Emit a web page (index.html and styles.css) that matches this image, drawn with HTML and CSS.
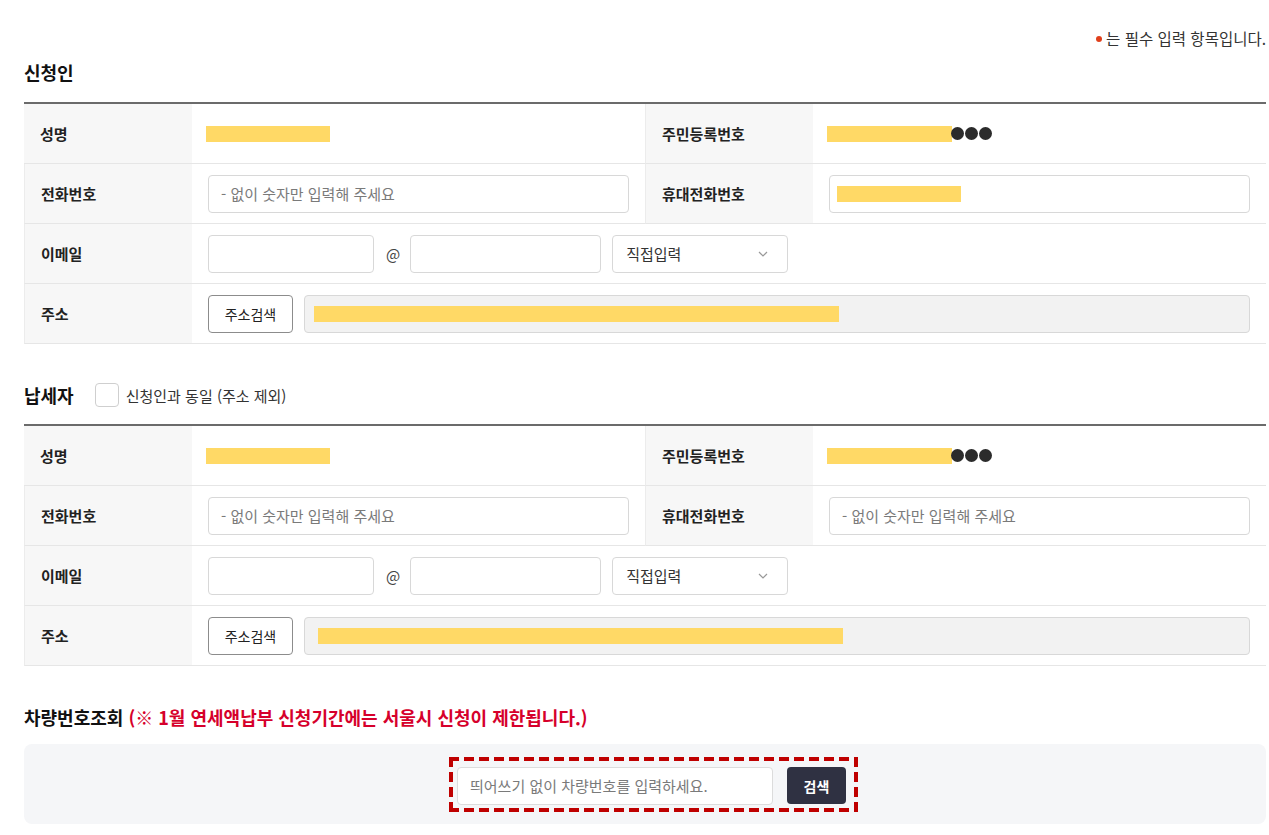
FILE: index.html
```html
<!DOCTYPE html>
<html lang="ko">
<head>
<meta charset="UTF-8">
<meta name="viewport" content="width=device-width, initial-scale=1.0">
<title>자동차세 연세액 신청</title>
<link rel="stylesheet" href="styles.css">
</head>
<body>

<div class="page">
  <p class="notice"><span class="req-dot"></span>는 필수 입력 항목입니다.</p>

  <h3 class="section-title">신청인</h3>
  <div class="form-table">
    <div class="cell label">성명</div>
    <div class="cell value"><span class="mask mask-name"></span></div>
    <div class="cell label">주민등록번호</div>
    <div class="cell value"><span class="mask mask-id"></span><span class="dots"><i></i><i></i><i></i></span></div>

    <div class="cell label">전화번호</div>
    <div class="cell value"><input class="field wide" type="text" placeholder="- 없이 숫자만 입력해 주세요"></div>
    <div class="cell label">휴대전화번호</div>
    <div class="cell value"><div class="field wide filled"><span class="mask mask-phone"></span></div></div>

    <div class="cell label">이메일</div>
    <div class="cell value span3">
      <input class="field email-id" type="text">
      <span class="at">@</span>
      <input class="field email-domain" type="text">
      <div class="field select">직접입력
        <svg width="10" height="6" viewBox="0 0 10 6"><path d="M1 1l4 4 4-4" fill="none" stroke="#999" stroke-width="1.2"/></svg>
      </div>
    </div>

    <div class="cell label">주소</div>
    <div class="cell value span3">
      <button type="button" class="btn-addr">주소검색</button>
      <div class="field addr"><span class="mask mask-addr"></span></div>
    </div>
  </div>

  <div class="section-head">
    <h3 class="section-title">납세자</h3>
    <label class="check"><span class="box"></span>신청인과 동일 (주소 제외)</label>
  </div>
  <div class="form-table">
    <div class="cell label">성명</div>
    <div class="cell value"><span class="mask mask-name"></span></div>
    <div class="cell label">주민등록번호</div>
    <div class="cell value"><span class="mask mask-id"></span><span class="dots"><i></i><i></i><i></i></span></div>

    <div class="cell label">전화번호</div>
    <div class="cell value"><input class="field wide" type="text" placeholder="- 없이 숫자만 입력해 주세요"></div>
    <div class="cell label">휴대전화번호</div>
    <div class="cell value"><input class="field wide" type="text" placeholder="- 없이 숫자만 입력해 주세요"></div>

    <div class="cell label">이메일</div>
    <div class="cell value span3">
      <input class="field email-id" type="text">
      <span class="at">@</span>
      <input class="field email-domain" type="text">
      <div class="field select">직접입력
        <svg width="10" height="6" viewBox="0 0 10 6"><path d="M1 1l4 4 4-4" fill="none" stroke="#999" stroke-width="1.2"/></svg>
      </div>
    </div>

    <div class="cell label">주소</div>
    <div class="cell value span3">
      <button type="button" class="btn-addr">주소검색</button>
      <div class="field addr"><span class="mask mask-addr2"></span></div>
    </div>
  </div>

  <h3 class="section-title car-title">차량번호조회 <span class="warn">(※ 1월 연세액납부 신청기간에는 서울시 신청이 제한됩니다.)</span></h3>
  <div class="car-box">
    <div class="car-search">
      <input class="field car-input" type="text" placeholder="띄어쓰기 없이 차량번호를 입력하세요.">
      <button type="button" class="btn-search">검색</button>
    </div>
  </div>
</div>

</body>
</html>
```

FILE: styles.css
```css
body {
  margin: 0;
  padding: 0;
  background-color: #fff;
  font-family: "Noto Sans CJK KR", "Noto Sans", sans-serif;
  color: #222;
}

.page {
  padding: 0 3px 0 24px;
}

.notice {
  margin: 0;
  padding-top: 27px;
  display: flex;
  align-items: center;
  justify-content: flex-end;
  gap: 4px;
  font-size: 15.5px;
  line-height: 22px;
  color: #333;
}

.req-dot {
  width: 6px;
  height: 6px;
  border-radius: 50%;
  background-color: #e0401c;
  margin-top: 2px;
}

.section-title {
  margin: 0;
  font-size: 18px;
  font-weight: bold;
  color: #111;
  line-height: 26px;
}

.notice + .section-title {
  margin-top: 10px;
  margin-bottom: 17px;
}

.form-table {
  display: grid;
  grid-template-columns: 168px 453px 168px 1fr;
  border-top: 2px solid #6b6b6b;
}

.cell {
  height: 60px;
  border-bottom: 1px solid #e6e6e6;
  display: flex;
  align-items: center;
  box-sizing: border-box;
}

.label {
  background-color: #f7f7f7;
  padding-left: 16px;
  font-size: 15px;
  font-weight: bold;
  color: #222;
}

.value {
  padding-left: 16px;
  gap: 11px;
}

.value + .label {
  border-left: 1px solid #ececec;
}

.span3 {
  grid-column: span 3;
}

.mask {
  display: inline-block;
  height: 16px;
  background-color: #ffd966;
}

.mask-name {
  width: 124px;
  margin-left: -2px;
}

.mask-id {
  width: 125px;
  margin-left: -2px;
}

.mask-phone {
  width: 124px;
}

.mask-addr {
  width: 525px;
}

.mask-addr2 {
  width: 525px;
  margin-left: 4px;
}

.dots {
  display: inline-flex;
  gap: 1px;
  margin-left: -12px;
}

.dots i {
  display: block;
  width: 13px;
  height: 13px;
  border-radius: 50%;
  background-color: #2b2b2b;
}

.field {
  height: 38px;
  border: 1px solid #d8d8d8;
  border-radius: 4px;
  box-sizing: border-box;
  font-family: inherit;
  font-size: 15px;
  padding: 0 12px;
  color: #333;
  background-color: #fff;
}

.field::placeholder {
  color: #7a7a7a;
}

.wide {
  width: 421px;
}

.filled {
  display: flex;
  align-items: center;
  padding-left: 7px;
}

.email-id {
  width: 166px;
}

.at {
  font-size: 15px;
  color: #444;
  margin-left: 1px;
  margin-right: -1px;
}

.email-domain {
  width: 191px;
}

.select {
  width: 176px;
  display: flex;
  align-items: center;
  justify-content: space-between;
  padding: 0 19px 0 13px;
}

.btn-addr {
  height: 38px;
  width: 85px;
  border: 1px solid #8c8c8c;
  border-radius: 4px;
  background-color: #fff;
  font-family: inherit;
  font-size: 14px;
  color: #222;
  padding: 0;
}

.addr {
  flex: 1;
  margin-right: 16px;
  background-color: #f2f2f2;
  display: flex;
  align-items: center;
  padding-left: 9px;
}

.section-head {
  display: flex;
  align-items: center;
  gap: 21px;
  margin-top: 38px;
  margin-bottom: 16px;
}

.check {
  display: flex;
  align-items: center;
  gap: 7px;
  font-size: 15px;
  color: #333;
}

.check .box {
  width: 22px;
  height: 22px;
  border: 1px solid #cfcfcf;
  border-radius: 4px;
  background-color: #fff;
}

.car-title {
  margin-top: 38px;
  margin-bottom: 14px;
}

.warn {
  color: #d6002b;
}

.car-box {
  height: 80px;
  background-color: #f5f6f8;
  border-radius: 8px;
  display: flex;
  align-items: center;
  justify-content: center;
}

/* dashed highlight frame */
.car-search {
  display: flex;
  align-items: center;
  gap: 14px;
  padding: 10px 12px 7px 8px;
  margin-left: 17px;
  background:
    repeating-linear-gradient(90deg, #bf0000 0 10px, transparent 10px 15px) top left / 100% 4px no-repeat,
    repeating-linear-gradient(90deg, #bf0000 0 10px, transparent 10px 15px) bottom left / 100% 4px no-repeat,
    repeating-linear-gradient(180deg, #bf0000 0 10px, transparent 10px 15px) top left / 4px 100% no-repeat,
    repeating-linear-gradient(180deg, #bf0000 0 10px, transparent 10px 15px) top right / 4px 100% no-repeat;
}

.car-input {
  width: 316px;
  border-color: #dcdcdc;
}

.btn-search {
  height: 37px;
  width: 59px;
  border: none;
  border-radius: 4px;
  background-color: #2f3142;
  color: #fff;
  font-family: inherit;
  font-size: 14px;
  font-weight: bold;
}
```
